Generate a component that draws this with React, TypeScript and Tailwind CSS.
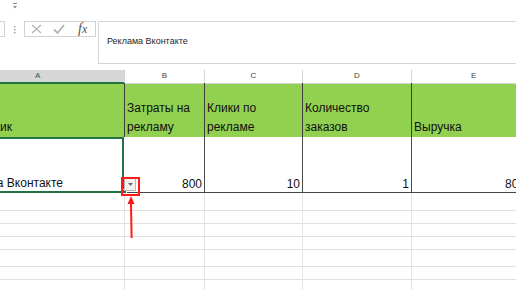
const cellFont = { fontFamily: '"Liberation Sans", Arial, sans-serif' };

function TopStrip() {
  return (
    <div className="h-[21px] pl-[12px] pt-[3px]">
      <svg width="6" height="6" viewBox="0 0 6 6">
        <rect x="1" y="0" width="4" height="1" fill="#8a8a8a" />
        <path d="M1 3h4l-2 2.5z" fill="#8a8a8a" />
      </svg>
    </div>
  );
}

function FormulaBar() {
  return (
    <div className="flex items-start h-[43px]">
      <div className="w-[5px] h-[16px] border border-l-0 border-[#d2d2d2]" />
      <div className="w-[19px] flex justify-center pt-[5px]">
        <svg width="2" height="8" viewBox="0 0 2 8">
          <rect x="0" y="0" width="1.5" height="1.5" fill="#a0a0a0" />
          <rect x="0" y="3" width="1.5" height="1.5" fill="#a0a0a0" />
          <rect x="0" y="6" width="1.5" height="1.5" fill="#a0a0a0" />
        </svg>
      </div>
      <div className="w-[72px] h-[16px] border border-[#d2d2d2] flex items-center pl-[6px] gap-[11px]">
        <svg width="11" height="10" viewBox="0 0 11 10">
          <path d="M1 1l9 8M10 1l-9 8" stroke="#b4b4b4" strokeWidth="1.2" fill="none" />
        </svg>
        <svg width="12" height="10" viewBox="0 0 12 10">
          <path d="M1 5.5l3.5 3.5 6.5-8" stroke="#b4b4b4" strokeWidth="1.8" fill="none" />
        </svg>
        <span className="text-[14px] leading-none text-[#555] ml-[2px]" style={{ fontFamily: '"Liberation Serif", serif' }}>
          <i>f</i>
          <i className="text-[12px]">x</i>
        </span>
      </div>
      <div className="ml-[2px] flex-1 h-[43px] border border-r-0 border-[#d4d4d4] pl-[8px] pt-[4px]">
        <span className="text-[9px] text-[#262626]" style={cellFont}>
          Реклама Вконтакте
        </span>
      </div>
    </div>
  );
}

const cols = ["A", "B", "C", "D", "E"];

function ColumnHeaders() {
  return (
    <div className="grid grid-cols-[124px_80px_98px_109px_116px] h-[13px] text-[8px] leading-[12px]" style={cellFont}>
      <div className="bg-[#d6d6d6] border-b-2 border-[#217346] text-[#1e5e38] pl-[35px]">A</div>
      {cols.slice(1).map((c) => (
        <div key={c} className={`border-l border-b border-[#d4d4d4] text-[#444] ${c === "E" ? "pl-[59px]" : "text-center"}`}>
          {c}
        </div>
      ))}
    </div>
  );
}

function HeaderRow() {
  const labels = [
    ["Затраты на", "рекламу"],
    ["Клики по", "рекламе"],
    ["Количество", "заказов"],
    ["Выручка"],
  ];
  return (
    <div className="grid grid-cols-[124px_80px_98px_109px_116px] h-[54px] bg-[#92d050] text-[12px] leading-[19px] text-[#111]" style={cellFont}>
      <div className="overflow-hidden flex items-end">
        <div className="w-[12px] flex justify-end whitespace-nowrap">Источник</div>
      </div>
      {labels.map((l, i) => (
        <div key={i} className="border-l border-[#3c3c3c] flex flex-col justify-end pl-[2px] whitespace-nowrap overflow-hidden">
          {l.map((t) => (
            <div key={t}>{t}</div>
          ))}
        </div>
      ))}
    </div>
  );
}

function DataRow() {
  const nums = ["800", "10", "1", "800"];
  return (
    <div className="grid grid-cols-[124px_80px_98px_109px_116px] h-[56px] text-[12px] leading-[16px] text-[#111]" style={cellFont}>
      <div className="overflow-hidden flex items-end border-t-2 border-r-2 border-b-2 border-[#217346]">
        <div className="w-[63px] flex justify-end whitespace-nowrap">Реклама Вконтакте</div>
      </div>
      {nums.map((n, i) => (
        <div key={i} className={`flex items-end justify-end pr-[2px] border-b border-[#444] ${i === 0 ? "" : "border-l border-l-[#4a4a4a]"}`}>
          {n}
        </div>
      ))}
    </div>
  );
}

function EmptyRows() {
  const heights = ["h-[18px]", "h-[13px]", "h-[13px]", "h-[13px]", "h-[17px]", "h-[13px]", "h-[13px]"];
  return (
    <div>
      {heights.map((h, r) => (
        <div key={r} className={`grid grid-cols-[124px_80px_98px_109px_116px] ${h}`}>
          {cols.map((c, i) => (
            <div key={c} className={`border-b border-[#e0e0e0] ${i === 0 ? "" : "border-l border-l-[#e3e3e3]"}`} />
          ))}
        </div>
      ))}
    </div>
  );
}

export default function App() {
  return (
    <div className="relative w-[516px] h-[290px] overflow-hidden bg-white">
      <TopStrip />
      <FormulaBar />
      <div className="h-[6px]" />
      <ColumnHeaders />
      <HeaderRow />
      <DataRow />
      <EmptyRows />

      {/* fill handle + quick-fill options button */}
      <div className="absolute left-[122px] top-[189px] w-[5px] h-[5px] bg-[#217346] border border-white" />
      <div className="absolute left-[124px] top-[178px] w-[12px] h-[13px] bg-[#f2f2f2] border border-[#b8b8b8] flex items-center justify-center">
        <svg width="5" height="3" viewBox="0 0 5 3">
          <path d="M0 0h5L2.5 3z" fill="#6a6a6a" />
        </svg>
      </div>

      {/* red annotation */}
      <div className="absolute left-[121px] top-[177px] w-[19px] h-[19px] border-2 border-[#ff1a1a]" />
      <svg className="absolute left-[124px] top-[195px]" width="14" height="46" viewBox="0 0 14 46">
        <path d="M7 1L3.5 9h7z" fill="#ff1a1a" />
        <path d="M7 8L7.6 43" stroke="#ff1a1a" strokeWidth="2" fill="none" />
      </svg>
    </div>
  );
}
